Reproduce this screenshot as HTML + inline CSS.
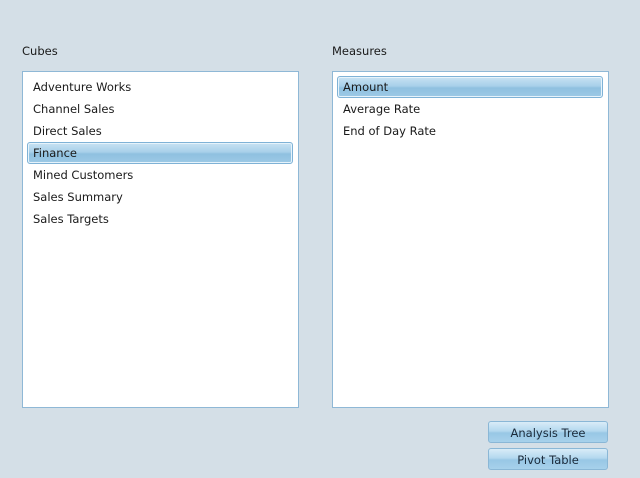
<!DOCTYPE html><html><head><style>
body{margin:0;width:640px;height:478px;background:#d4dfe7;font-family:"DejaVu Sans","Liberation Sans",sans-serif;font-size:11.5px;color:#1a1a1a;position:relative;overflow:hidden}
.lbl{position:absolute;top:44px}
.box{position:absolute;top:71px;width:275px;height:335px;background:#fff;border:1px solid #8fb8d6}
.it{position:absolute;left:4px;right:5px;height:22px;line-height:22px;padding-left:6px;box-sizing:border-box;top:1px}
.sel{background:linear-gradient(#c8e2f3 0%,#a8d0ea 45%,#8fc0e0 55%,#9dcae6 100%);border:1px solid #7fb2d6;border-radius:3px;box-shadow:inset 0 0 0 1px #e6f3fb;padding-left:5px;line-height:20px}
.btn{position:absolute;left:488px;width:120px;height:22px;line-height:22px;text-align:center;background:linear-gradient(#d9ecf8 0%,#b4d8ef 45%,#98c7e5 55%,#a7d1eb 100%);border:1px solid #8ab7d6;border-radius:3px;box-sizing:border-box;color:#1a2a3a}
</style></head><body>
<div class="lbl" style="left:22px">Cubes</div>
<div class="lbl" style="left:332px">Measures</div>
<div class="box" style="left:22px">
<div class="it" style="top:4px">Adventure Works</div>
<div class="it" style="top:26px">Channel Sales</div>
<div class="it" style="top:48px">Direct Sales</div>
<div class="it sel" style="top:70px">Finance</div>
<div class="it" style="top:92px">Mined Customers</div>
<div class="it" style="top:114px">Sales Summary</div>
<div class="it" style="top:136px">Sales Targets</div>
</div>
<div class="box" style="left:332px">
<div class="it sel" style="top:4px">Amount</div>
<div class="it" style="top:26px">Average Rate</div>
<div class="it" style="top:48px">End of Day Rate</div>
</div>
<div class="btn" style="top:421px">Analysis Tree</div>
<div class="btn" style="top:448px">Pivot Table</div>
</body></html>
